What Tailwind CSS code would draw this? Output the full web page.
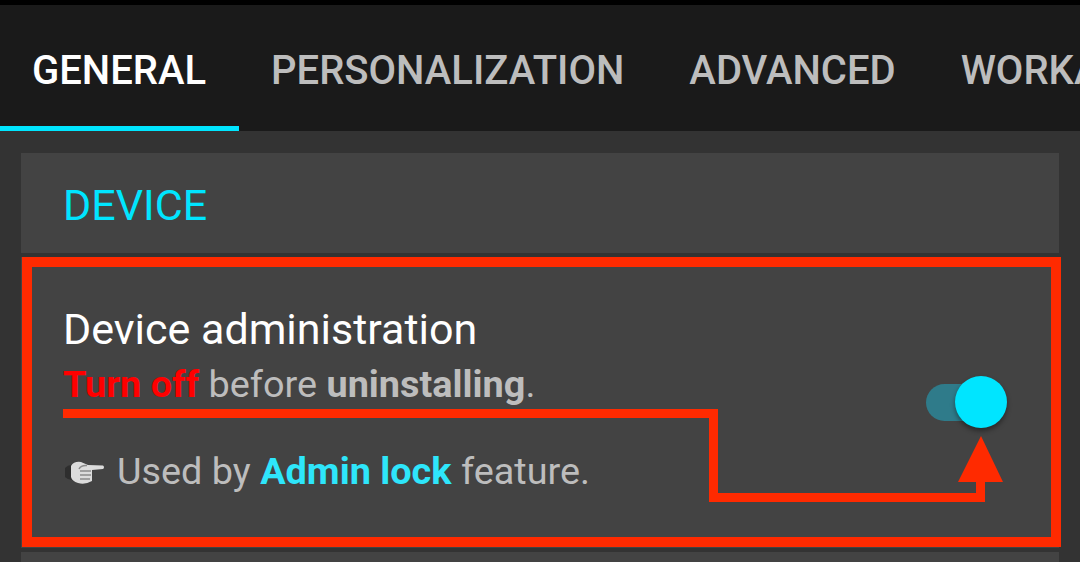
<!DOCTYPE html>
<html lang="en">
<head>
  <meta charset="UTF-8" />
  <title>Settings</title>
  <script src="https://cdn.jsdelivr.net/npm/@tailwindcss/browser@4"></script>
</head>
<body class="bg-[#333333] font-['Roboto',sans-serif] overflow-hidden">
  <div class="relative w-[1080px] h-[562px] overflow-hidden">
    <!-- Status bar edge -->
    <div class="h-[5px] bg-black"></div>

    <!-- Tabs -->
    <div class="flex h-[126px] bg-[#1a1a1a] overflow-hidden text-[40px] font-medium text-[#bdbdbd] whitespace-nowrap">
      <div class="w-[239px] shrink-0 h-full border-b-[5px] border-[#00e5ff] pl-[32px] pt-[41px] text-white leading-[50px]">GENERAL</div>
      <div class="shrink-0 pl-[32px] pt-[41px] leading-[50px]">PERSONALIZATION</div>
      <div class="shrink-0 pl-[65px] pt-[41px] leading-[50px]">ADVANCED</div>
      <div class="shrink-0 pl-[65px] pt-[41px] leading-[50px]">WORKAROUNDS</div>
    </div>

    <!-- Settings list -->
    <div class="pt-[22px] pl-[21px] w-[1059px]">
      <div class="h-[100px] bg-[#434343] pl-[42px] pt-[27px] text-[43px] leading-[50px] text-[#00e5ff]">DEVICE</div>
      <div class="mt-[4px] h-[291px] bg-[#434343] pl-[42px] pt-[45px] flex justify-between">
        <div>
          <div class="text-[43px] leading-[54px] text-white">Device administration</div>
          <div class="mt-[1px] text-[37.85px] leading-[54px] text-[#bdbdbd]"><b class="font-bold text-[#ff0000]">Turn off</b> before <b class="font-bold">uninstalling</b>.</div>
          <div class="mt-[33px] flex items-center text-[37.85px] leading-[54px] text-[#bdbdbd]">
            <svg class="mr-[12px] ml-[2px] mt-[2px]" width="40" height="24" viewBox="0 0 40 24">
              <path d="M0 8 Q3 5 6 5 L7 20 Q3 20 0 17 Z" fill="#2e2e2e"/>
              <path d="M6 6 Q9 1 16 2 L23 5 L38 5.500 Q40 7 38 9 L27 10 L27 21 Q20 25 13 23 Q7 21 6 17 Z" fill="#dcdcdc"/>
              <path d="M15 11 H26 M15 15 H26 M15 19 H25 M22 5.500 Q16 5 14 9" stroke="#8a8a8a" stroke-width="1.500" fill="none"/>
            </svg>
            <span>Used by <b class="font-bold text-[#2ee6fb]">Admin lock</b> feature.</span>
          </div>
        </div>
        <!-- Toggle -->
        <div class="relative mt-[74px] mr-[52px] w-[81px] h-[52px]">
          <div class="absolute left-0 top-[8px] w-[60px] h-[37px] rounded-full bg-[#2f7b8a]"></div>
          <div class="absolute right-0 top-0 w-[52px] h-[52px] rounded-full bg-[#00e5ff] shadow-[0_3px_5px_rgba(0,0,0,0.4)]"></div>
        </div>
      </div>
      <div class="mt-[4px] h-[40px] bg-[#434343]"></div>
    </div>

    <!-- Red annotation drawn over the screenshot -->
    <svg class="absolute left-0 top-0 pointer-events-none" width="1080" height="562" viewBox="0 0 1080 562">
      <rect x="27" y="262" width="1029" height="280" fill="none" stroke="#ff2a00" stroke-width="10"/>
      <path d="M63 413.500 H713.500 V497.500 H980.500 V475" fill="none" stroke="#ff2a00" stroke-width="9"/>
      <path d="M981 436 L1003 482 H958 Z" fill="#ff2a00"/>
    </svg>
  </div>
</body>
</html>
